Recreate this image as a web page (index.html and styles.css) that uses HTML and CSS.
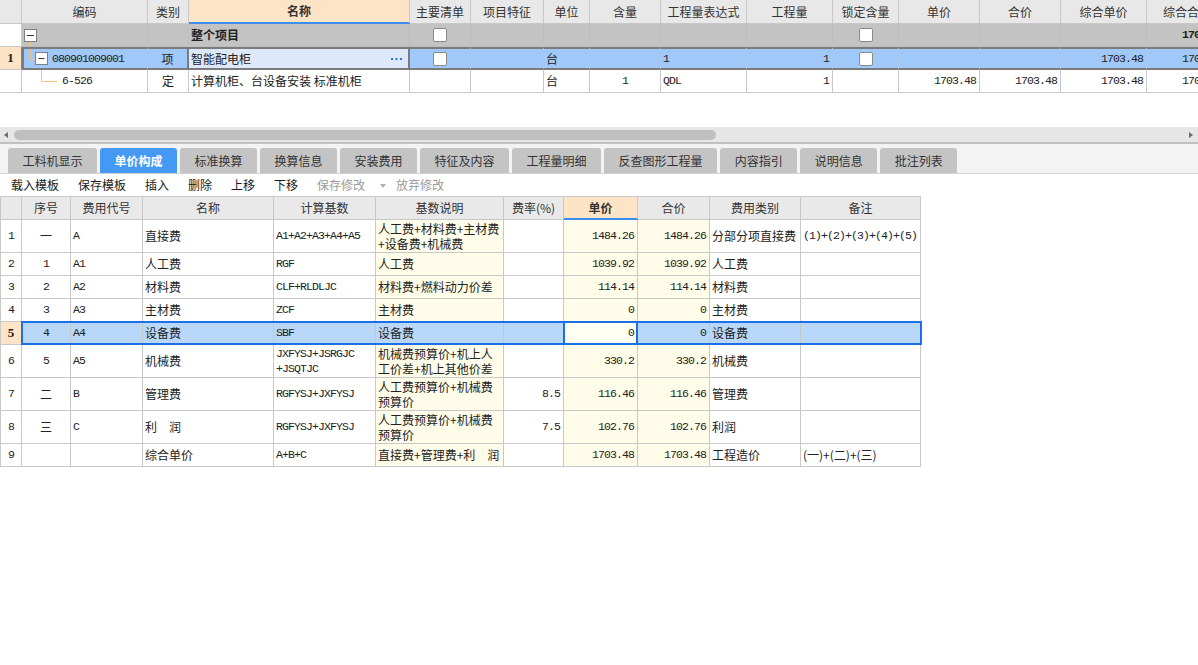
FILE: index.html
```html
<!DOCTYPE html>
<html lang="zh-CN">
<head>
<meta charset="utf-8">
<title>单价构成</title>
<link rel="stylesheet" href="styles.css">
</head>
<body>
<div class="top">
  <div class="trow thead">
    <div class="c"></div><div class="c">编码</div><div class="c">类别</div><div class="c hl">名称</div><div class="c">主要清单</div><div class="c">项目特征</div><div class="c">单位</div><div class="c">含量</div><div class="c">工程量表达式</div><div class="c">工程量</div><div class="c">锁定含量</div><div class="c">单价</div><div class="c">合价</div><div class="c">综合单价</div><div class="c">综合合价</div>
  </div>
  <div class="trow group">
    <div class="c c0"></div>
    <div class="c code"><svg width="16" height="22" viewBox="0 0 16 22"><line x1="8.5" y1="18" x2="8.5" y2="22" stroke="#f5c27a"/><rect x="2.5" y="5.5" width="12" height="12" fill="#fff" stroke="#7f7f7f"/><line x1="5" y1="11.5" x2="12" y2="11.5" stroke="#333"/></svg></div>
    <div class="c"></div>
    <div class="c b">整个项目</div>
    <div class="c m"><span class="cb"></span></div>
    <div class="c"></div><div class="c"></div><div class="c"></div><div class="c"></div><div class="c"></div>
    <div class="c m"><span class="cb"></span></div>
    <div class="c"></div><div class="c"></div><div class="c"></div>
    <div class="c r n b">1703.48</div>
  </div>
  <div class="trow sel">
    <div class="c c0 m n b">1</div>
    <div class="c code"><svg width="28" height="19" viewBox="0 0 28 19"><polyline points="6.5,0 6.5,10.5 11,10.5" fill="none" stroke="#f5c27a"/><line x1="17.5" y1="15.5" x2="17.5" y2="19" stroke="#f5c27a"/><rect x="11.5" y="3.5" width="12" height="12" fill="#fff" stroke="#7f7f7f"/><line x1="14.5" y1="9.5" x2="20.5" y2="9.5" stroke="#333"/></svg><span class="n">080901009001</span></div>
    <div class="c m kind">项</div>
    <div class="c name">智能配电柜<svg class="dots" width="11" height="2" viewBox="0 0 11 2"><rect x="0" y="0" width="2" height="2" fill="#2f74d0"/><rect x="4.5" y="0" width="2" height="2" fill="#2f74d0"/><rect x="9" y="0" width="2" height="2" fill="#2f74d0"/></svg></div>
    <div class="c m"><span class="cb"></span></div>
    <div class="c"></div>
    <div class="c">台</div>
    <div class="c"></div>
    <div class="c n">1</div>
    <div class="c r n">1</div>
    <div class="c m"><span class="cb"></span></div>
    <div class="c"></div><div class="c"></div>
    <div class="c r n">1703.48</div>
    <div class="c r n">1703.48</div>
  </div>
  <div class="trow">
    <div class="c c0"></div>
    <div class="c code"><svg width="40" height="22" viewBox="0 0 40 22"><polyline points="19.5,0 19.5,11.5 35,11.5" fill="none" stroke="#f5c27a"/></svg><span class="n">6-526</span></div>
    <div class="c m">定</div>
    <div class="c">计算机柜、台设备安装 标准机柜</div>
    <div class="c"></div><div class="c"></div>
    <div class="c">台</div>
    <div class="c m n">1</div>
    <div class="c n">QDL</div>
    <div class="c r n">1</div>
    <div class="c"></div>
    <div class="c r n">1703.48</div>
    <div class="c r n">1703.48</div>
    <div class="c r n">1703.48</div>
    <div class="c r n">1703.48</div>
  </div>
</div>

<div class="hscroll">
  <span class="arr-l"></span>
  <span class="thumb"></span>
  <span class="spacer"></span>
  <span class="arr-r"></span>
</div>

<div class="tabs">
  <div class="tab">工料机显示</div>
  <div class="tab on">单价构成</div>
  <div class="tab">标准换算</div>
  <div class="tab">换算信息</div>
  <div class="tab">安装费用</div>
  <div class="tab">特征及内容</div>
  <div class="tab">工程量明细</div>
  <div class="tab">反查图形工程量</div>
  <div class="tab">内容指引</div>
  <div class="tab">说明信息</div>
  <div class="tab">批注列表</div>
</div>

<div class="tools">
  <span>载入模板</span>
  <span>保存模板</span>
  <span>插入</span>
  <span>删除</span>
  <span>上移</span>
  <span>下移</span>
  <span class="dis">保存修改</span>
  <span class="drop"></span>
  <span class="dis">放弃修改</span>
</div>

<div class="lower">
  <div class="lrow lhead">
    <div class="c"></div><div class="c">序号</div><div class="c">费用代号</div><div class="c">名称</div><div class="c">计算基数</div><div class="c">基数说明</div><div class="c">费率(%)</div><div class="c hl">单价</div><div class="c">合价</div><div class="c">费用类别</div><div class="c">备注</div>
  </div>
  <div class="lrow t2">
    <div class="c m n">1</div><div class="c m">一</div><div class="c n">A</div><div class="c">直接费</div><div class="c n">A1+A2+A3+A4+A5</div>
    <div class="c y two">人工费+材料费+主材费<br>+设备费+机械费</div><div class="c"></div>
    <div class="c y r n">1484.26</div><div class="c y r n">1484.26</div><div class="c">分部分项直接费</div><div class="c n">(1)+(2)+(3)+(4)+(5)</div>
  </div>
  <div class="lrow">
    <div class="c m n">2</div><div class="c m n">1</div><div class="c n">A1</div><div class="c">人工费</div><div class="c n">RGF</div>
    <div class="c y">人工费</div><div class="c"></div>
    <div class="c y r n">1039.92</div><div class="c y r n">1039.92</div><div class="c">人工费</div><div class="c"></div>
  </div>
  <div class="lrow">
    <div class="c m n">3</div><div class="c m n">2</div><div class="c n">A2</div><div class="c">材料费</div><div class="c n">CLF+RLDLJC</div>
    <div class="c y">材料费+燃料动力价差</div><div class="c"></div>
    <div class="c y r n">114.14</div><div class="c y r n">114.14</div><div class="c">材料费</div><div class="c"></div>
  </div>
  <div class="lrow">
    <div class="c m n">4</div><div class="c m n">3</div><div class="c n">A3</div><div class="c">主材费</div><div class="c n">ZCF</div>
    <div class="c y">主材费</div><div class="c"></div>
    <div class="c y r n">0</div><div class="c y r n">0</div><div class="c">主材费</div><div class="c"></div>
  </div>
  <div class="lrow lsel">
    <div class="c c0 m n b">5</div><div class="c m n">4</div><div class="c n">A4</div><div class="c">设备费</div><div class="c n">SBF</div>
    <div class="c">设备费</div><div class="c"></div>
    <div class="c r n edit">0</div><div class="c r n">0</div><div class="c">设备费</div><div class="c"></div>
  </div>
  <div class="lrow t2">
    <div class="c m n">6</div><div class="c m n">5</div><div class="c n">A5</div><div class="c">机械费</div><div class="c n two">JXFYSJ+JSRGJC<br>+JSQTJC</div>
    <div class="c y two">机械费预算价+机上人<br>工价差+机上其他价差</div><div class="c"></div>
    <div class="c y r n">330.2</div><div class="c y r n">330.2</div><div class="c">机械费</div><div class="c"></div>
  </div>
  <div class="lrow t2">
    <div class="c m n">7</div><div class="c m">二</div><div class="c n">B</div><div class="c">管理费</div><div class="c n">RGFYSJ+JXFYSJ</div>
    <div class="c y two">人工费预算价+机械费<br>预算价</div><div class="c r n">8.5</div>
    <div class="c y r n">116.46</div><div class="c y r n">116.46</div><div class="c">管理费</div><div class="c"></div>
  </div>
  <div class="lrow t2">
    <div class="c m n">8</div><div class="c m">三</div><div class="c n">C</div><div class="c">利　润</div><div class="c n">RGFYSJ+JXFYSJ</div>
    <div class="c y two">人工费预算价+机械费<br>预算价</div><div class="c r n">7.5</div>
    <div class="c y r n">102.76</div><div class="c y r n">102.76</div><div class="c">利润</div><div class="c"></div>
  </div>
  <div class="lrow">
    <div class="c m n">9</div><div class="c"></div><div class="c"></div><div class="c">综合单价</div><div class="c n">A+B+C</div>
    <div class="c y">直接费+管理费+利　润</div><div class="c"></div>
    <div class="c y r n">1703.48</div><div class="c y r n">1703.48</div><div class="c">工程造价</div><div class="c">(一)+(二)+(三)</div>
  </div>
</div>
</body>
</html>
```

FILE: styles.css
```css
* { box-sizing: border-box; margin: 0; padding: 0; }
html, body { width: 1198px; height: 665px; overflow: hidden; background: #fff; }
body {
  font-family: "Noto Sans CJK SC", "Noto Sans", sans-serif;
  font-size: 12px;
  line-height: 14px;
  color: #222;
  display: flex;
  flex-direction: column;
}

/* generic cell */
.c {
  border-right: 1px solid #c8c8c8;
  border-bottom: 1px solid #c8c8c8;
  display: flex;
  align-items: center;
  padding: 0 2px;
  white-space: nowrap;
  overflow: hidden;
  min-width: 0;
}
.m { justify-content: center; }
.r { justify-content: flex-end; padding-right: 3px; }
.b { font-weight: bold; }
.n {
  font-family: "Liberation Mono", "Noto Sans CJK SC", monospace;
  font-size: 11.5px;
  letter-spacing: -0.9px;
}

/* top grid */
.top { height: 127px; overflow: hidden; flex: none; width: 1198px; }
.trow {
  display: grid;
  grid-template-columns: 22px 126px 41px 221px 61px 73px 46px 71px 86px 86px 66px 81px 81px 86px 81px;
  width: 1228px;
  height: 23px;
}
.thead { height: 24px; background: #e8e8e8; }
.thead .c { justify-content: center; color: #333; }
.thead .hl { background: #fde4c6; font-weight: bold; border-bottom: 2px solid #3b8ef0; }

.code { padding: 0; }
.code svg { display: block; flex: none; }

.cb {
  width: 14px;
  height: 14px;
  border: 1px solid #8a8a8a;
  border-radius: 2px;
  background: #fff;
  display: block;
}

.group .c { background: #c3c3c3; border-right-color: #bdbdbd; border-bottom-color: #bdbdbd; }
.group .c0 { background: #fff; border-right-color: #c8c8c8; border-bottom-color: #c8c8c8; }

.sel .c {
  background: #a0c8f8;
  border-top: 2px solid #7b7b7b;
  border-bottom: 2px solid #7b7b7b;
  border-right-color: #a8c8f0;
}
.sel .c0 {
  background: #fde4c6;
  border-top: none;
  border-bottom: 1px solid #c8c8c8;
  border-right: 1px solid #3b8ef0;
  font-family: "Liberation Serif", serif;
  font-size: 13px;
  letter-spacing: 0;
}
.sel .code { border-left: 2px solid #7b7b7b; }
.sel .kind { border-right: 2px solid #7b7b7b; }
.sel .name { background: #dde9fb; border-right: 2px solid #7b7b7b; }
.dots { margin-left: auto; margin-right: 4px; display: block; flex: none; }

/* horizontal scrollbar */
.hscroll {
  flex: none;
  height: 17px;
  background: #e6e6e6;
  border-bottom: 2px solid #c0c0c0;
  display: flex;
  align-items: center;
}
.arr-l {
  margin-left: 4px;
  width: 0; height: 0;
  border-right: 4px solid #6b6b6b;
  border-top: 3.5px solid transparent;
  border-bottom: 3.5px solid transparent;
}
.thumb {
  margin-left: 6px;
  width: 702px;
  height: 10px;
  border-radius: 5px;
  background: #bfbfbf;
}
.spacer { flex: 1; }
.arr-r {
  margin-right: 5px;
  width: 0; height: 0;
  border-left: 4px solid #6b6b6b;
  border-top: 3.5px solid transparent;
  border-bottom: 3.5px solid transparent;
}

/* tabs */
.tabs {
  flex: none;
  height: 30px;
  display: flex;
  gap: 3px;
  padding: 4px 0 0 8px;
  background: #f3f3f3;
  border-bottom: 1px solid #d2d2d2;
}
.tab {
  height: 25px;
  padding: 0 14.5px;
  background: #c4c4c4;
  border-radius: 3px 3px 0 0;
  display: flex;
  align-items: center;
  color: #333;
}
.tab.on { background: #4499f5; color: #fff; font-weight: bold; }

/* toolbar */
.tools {
  flex: none;
  height: 22px;
  display: flex;
  align-items: center;
  gap: 19px;
  padding-left: 11px;
  color: #1a1a1a;
}
.tools .dis { color: #9a9a9a; }
.drop {
  width: 0; height: 0;
  border-top: 4px solid #b0b0b0;
  border-left: 3px solid transparent;
  border-right: 3px solid transparent;
  margin: 2px -9px 0 -4px;
}

/* lower grid */
.lower {
  flex: none;
  width: 921px;
  border-left: 1px solid #c8c8c8;
  border-top: 1px solid #c8c8c8;
}
.lrow {
  display: grid;
  grid-template-columns: 21px 49px 72px 131px 102px 128px 60px 74px 72px 91px 120px;
  height: 23px;
}
.lrow.t2 { height: 33px; }
.lhead { background: #e9e9e9; }
.lhead .c { justify-content: center; color: #333; }
.lhead .hl { background: #fde4c6; font-weight: bold; border-bottom: 2px solid #3b8ef0; }
.y { background: #fffde9; }
.two { line-height: 15px; }

.lsel { position: relative; }
.lsel .c { background: #b8d7f9; }
.lsel .c0 { background: #fde4c6; font-family: "Liberation Serif", serif; font-size: 13px; letter-spacing: 0; }
.lsel .edit { background: #fffff2; position: relative; overflow: visible; }
.lsel .edit::after {
  content: "";
  position: absolute;
  top: 0; bottom: 0; left: -1px; right: -1px;
  border-left: 2px solid #1d6fe5;
  border-right: 2px solid #1d6fe5;
}
.lsel::after {
  content: "";
  position: absolute;
  left: 20px; right: -1px; top: -1px; bottom: 0;
  border: 2px solid #1d6fe5;
  pointer-events: none;
}
```
